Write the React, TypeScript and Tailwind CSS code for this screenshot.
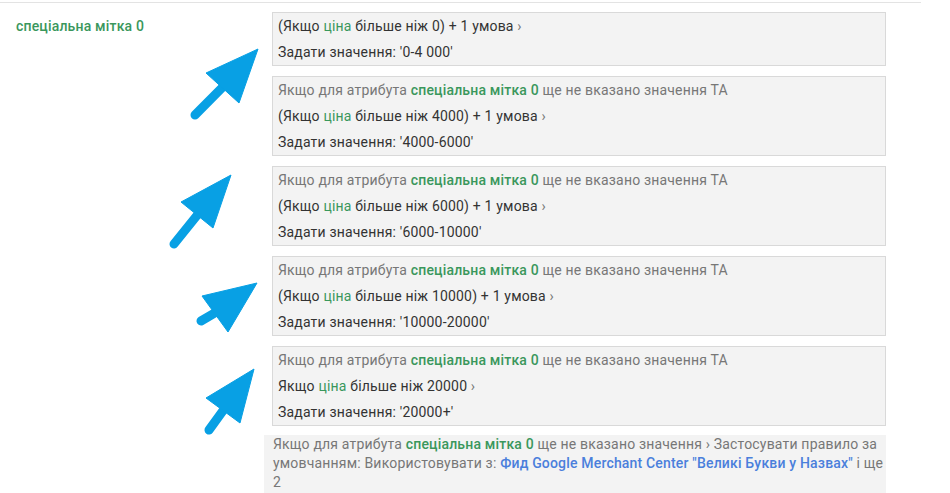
import React from "react";

const G = ({ children }: { children: React.ReactNode }) => (
  <span className="text-[#3a975c]">{children}</span>
);
const GB = ({ children }: { children: React.ReactNode }) => (
  <span className="text-[#3a975c] font-medium">{children}</span>
);
const Chev = () => <span className="text-[#777]"> ›</span>;

type Rule = { prev: boolean; cond: React.ReactNode; value: string };

const rules: Rule[] = [
  {
    prev: false,
    cond: (
      <>
        (Якщо <G>ціна</G> більше ніж 0) + 1 умова
      </>
    ),
    value: "'0-4 000'",
  },
  {
    prev: true,
    cond: (
      <>
        (Якщо <G>ціна</G> більше ніж 4000) + 1 умова
      </>
    ),
    value: "'4000-6000'",
  },
  {
    prev: true,
    cond: (
      <>
        (Якщо <G>ціна</G> більше ніж 6000) + 1 умова
      </>
    ),
    value: "'6000-10000'",
  },
  {
    prev: true,
    cond: (
      <>
        (Якщо <G>ціна</G> більше ніж 10000) + 1 умова
      </>
    ),
    value: "'10000-20000'",
  },
  {
    prev: true,
    cond: (
      <>
        Якщо <G>ціна</G> більше ніж 20000
      </>
    ),
    value: "'20000+'",
  },
];

type Arrow = {
  tip: [number, number];
  l: [number, number];
  r: [number, number];
  tail: [number, number];
};

const arrows: Arrow[] = [
  { tip: [258, 49], l: [206, 73], r: [239, 103], tail: [195, 115] },
  { tip: [231, 175], l: [181, 202], r: [213, 228], tail: [174, 244] },
  { tip: [257, 283], l: [202, 296], r: [228, 332], tail: [201, 321] },
  { tip: [254, 369], l: [206, 398], r: [240, 423], tail: [209, 430] },
];

function Arrows() {
  return (
    <svg
      className="absolute left-0 top-0 pointer-events-none"
      width={950}
      height={493}
      viewBox="0 0 950 493"
    >
      {arrows.map((a, i) => {
        const mx = (a.l[0] + a.r[0]) / 2;
        const my = (a.l[1] + a.r[1]) / 2;
        const sx = mx + (a.tip[0] - mx) * 0.2;
        const sy = my + (a.tip[1] - my) * 0.2;
        return (
          <g key={i} fill="#08a0e4" stroke="#08a0e4">
            <line
              x1={a.tail[0]}
              y1={a.tail[1]}
              x2={sx}
              y2={sy}
              strokeWidth={9}
              strokeLinecap="round"
            />
            <polygon
              points={`${a.tip[0]},${a.tip[1]} ${a.l[0]},${a.l[1]} ${a.r[0]},${a.r[1]}`}
              strokeWidth={1}
              strokeLinejoin="miter"
            />
          </g>
        );
      })}
    </svg>
  );
}

export default function App() {
  return (
    <div className="relative w-[950px] h-[493px] overflow-hidden bg-white font-['Roboto','Liberation_Sans',sans-serif] text-[14px] tracking-[0.18px] text-[#333]">
      <div className="mt-[2px] w-[921px] border-t border-[#e3e3e3]" />
      <div className="flex pt-[9px]">
        <div className="w-[264px] shrink-0 pl-[16px] pt-[1px] leading-[26px] font-medium text-[#3a975c]">
          спеціальна мітка 0
        </div>
        <div className="w-[622px] flex flex-col">
          <div className="ml-[8px] flex flex-col gap-[10px]">
            {rules.map((r, i) => (
              <div
                key={i}
                className="border border-[#d9d9d9] bg-[#f3f3f3] pl-[5px] leading-[26px]"
              >
                {r.prev && (
                  <div className="text-[#777]">
                    Якщо для атрибута <GB>спеціальна мітка 0</GB> ще не вказано
                    значення ТА
                  </div>
                )}
                <div>
                  {r.cond}
                  <Chev />
                </div>
                <div>Задати значення: {r.value}</div>
              </div>
            ))}
          </div>
          <div className="mt-[9px] bg-[#f3f3f3] pl-[9px] pr-[2px] pb-[2px] leading-[19px] text-[#777]">
            Якщо для атрибута <GB>спеціальна мітка 0</GB> ще не вказано значення
            › Застосувати правило за умовчанням: Використовувати з:{" "}
            <span className="font-medium text-[#4a7fdc]">
              Фид Google Merchant Center "Великі Букви у Назвах"
            </span>{" "}
            і ще 2
          </div>
        </div>
      </div>
      <Arrows />
    </div>
  );
}
